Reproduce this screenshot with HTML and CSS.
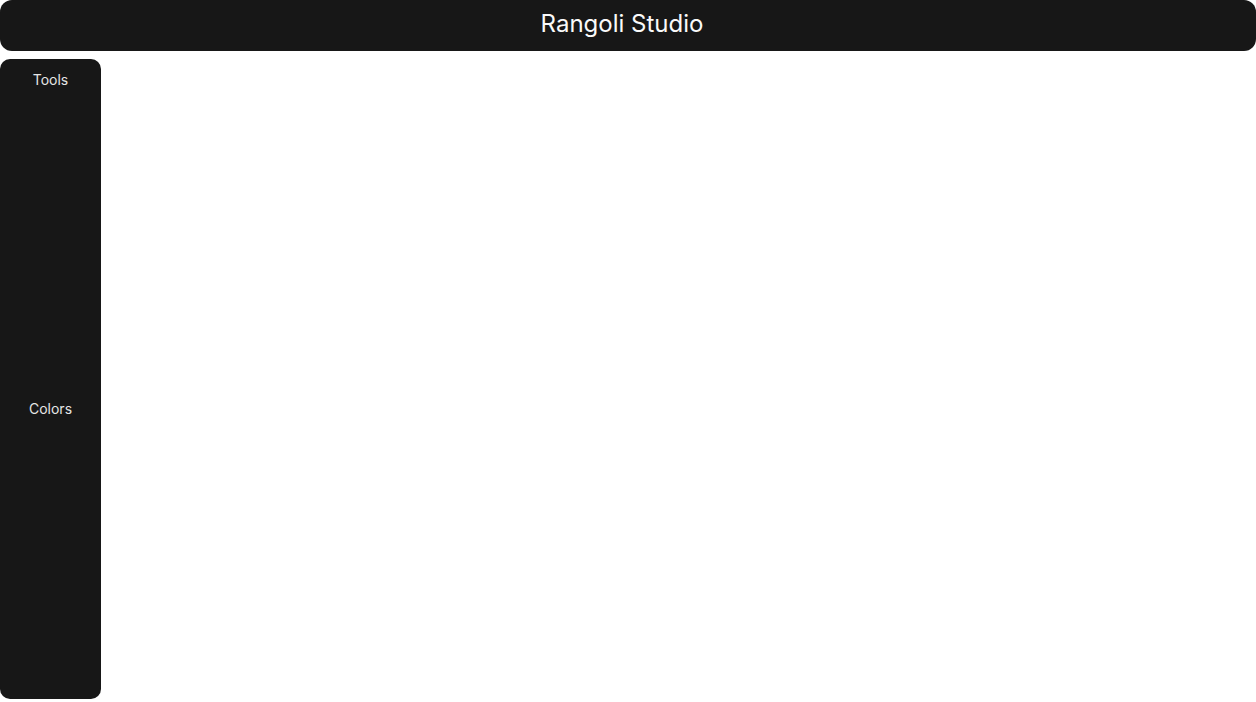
FILE: index.html
```html
<!DOCTYPE html>
<html>
<head>
<meta charset="utf-8">
<link rel="stylesheet" href="styles.css">
</head>
<body>
<div class="app">
  <header class="topbar"><h1 class="title">Rangoli Studio</h1></header>
  <div class="main">
    <aside class="sidebar">
      <section class="panel panel-tools"><h2 class="panel-title">Tools</h2></section>
      <section class="panel panel-colors"><h2 class="panel-title">Colors</h2></section>
    </aside>
    <div class="canvas"></div>
  </div>
</div>
</body>
</html>
```
FILE: styles.css
```css
* { box-sizing: border-box; }
html, body { margin: 0; padding: 0; background: #fff; }
body { font-family: Inter, "Noto Sans", sans-serif; }
.app { display: flex; flex-direction: column; gap: 8px; height: 699px; }
.topbar {
  height: 51px;
  background: #171717;
  border-radius: 12px;
  display: flex;
  align-items: center;
  justify-content: center;
  padding: 0 12px 3px 0;
}
.title { margin: 0; font-size: 24px; font-weight: 400; color: #fafafa; line-height: 1; }
.main { flex: 1; display: flex; min-height: 0; }
.sidebar {
  width: 101px;
  background: #171717;
  border-radius: 10px;
  display: flex;
  flex-direction: column;
}
.panel { display: flex; flex-direction: column; align-items: center; }
.panel-tools { height: 341px; padding-top: 12px; }
.panel-colors { flex: 1; }
.panel-title { margin: 0; font-size: 14px; font-weight: 400; color: #e5e5e5; line-height: 17px; }
.canvas { flex: 1; }
```
